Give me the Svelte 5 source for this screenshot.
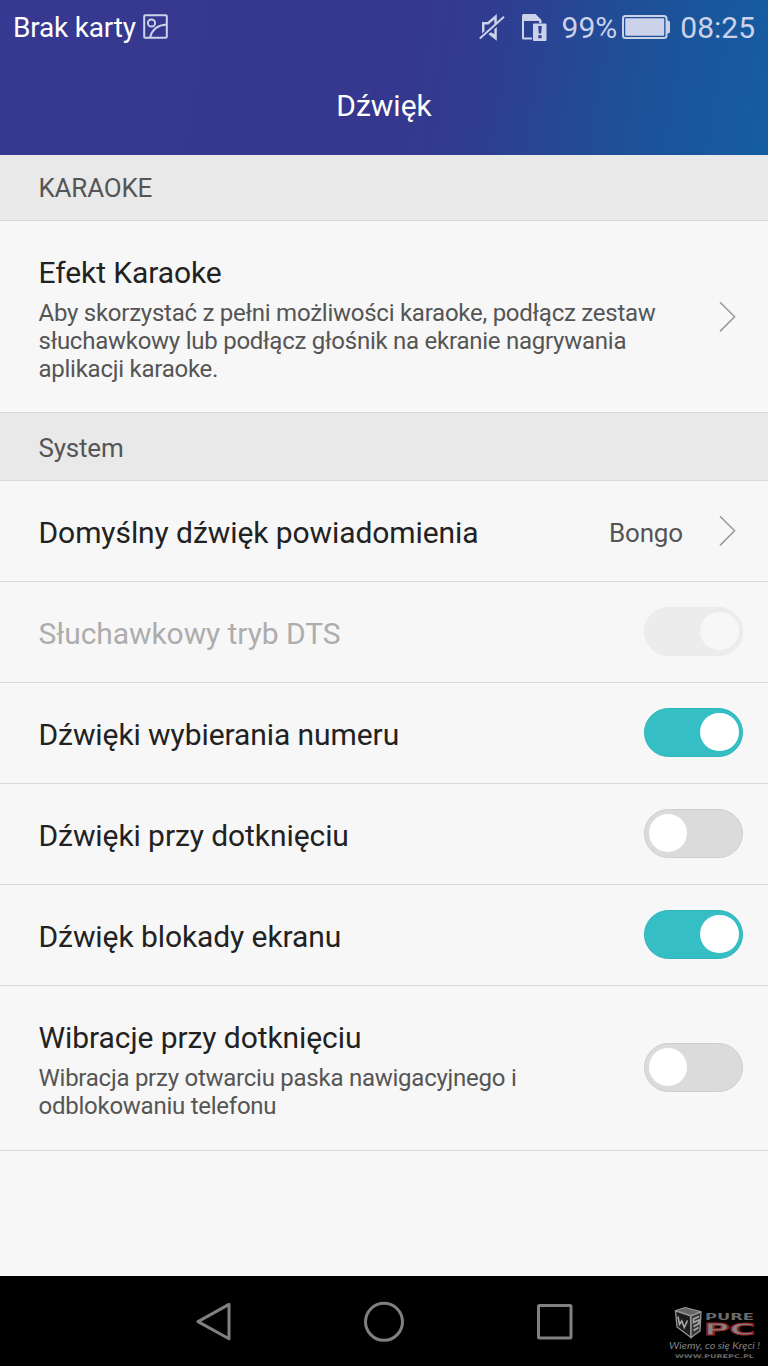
<script lang="ts">
    type Row = {
        title: string;
        summary?: string;
        value?: string;
        control: "arrow" | "switch";
        on?: boolean;
        disabled?: boolean;
    };

    type Section = { name: string; rows: Row[] };

    let sections: Section[] = $state([
        {
            name: "KARAOKE",
            rows: [
                {
                    title: "Efekt Karaoke",
                    summary:
                        "Aby skorzystać z pełni możliwości karaoke, podłącz zestaw słuchawkowy lub podłącz głośnik na ekranie nagrywania aplikacji karaoke.",
                    control: "arrow",
                },
            ],
        },
        {
            name: "System",
            rows: [
                { title: "Domyślny dźwięk powiadomienia", value: "Bongo", control: "arrow" },
                { title: "Słuchawkowy tryb DTS", control: "switch", on: true, disabled: true },
                { title: "Dźwięki wybierania numeru", control: "switch", on: true },
                { title: "Dźwięki przy dotknięciu", control: "switch", on: false },
                { title: "Dźwięk blokady ekranu", control: "switch", on: true },
                {
                    title: "Wibracje przy dotknięciu",
                    summary: "Wibracja przy otwarciu paska nawigacyjnego i odblokowaniu telefonu",
                    control: "switch",
                    on: false,
                },
            ],
        },
    ]);
</script>

<div class="screen">
    <header>
        <div class="status-bar">
            <span class="carrier">Brak karty</span>
            <svg class="picture" width="25" height="25" viewBox="0 0 25 25">
                <rect x="1.2" y="1.2" width="22.6" height="22.6" rx="1" />
                <circle cx="8.5" cy="9" r="3.6" />
                <path d="M7 23.5C9 16 15 11 23.5 10.5" />
            </svg>
            <div class="status-right">
                <svg class="mute" width="26" height="27" viewBox="0 0 26 27">
                    <path class="fill" d="M17.800 0V8.500L15.300 10.800V5.500L9.500 10.500H5.500V17L3 19.500V8H8.500z" />
                    <path class="fill" d="M17.800 13V26.800L9.500 20.300 11.800 18.200 15.300 20V15.200z" />
                    <path d="M.8 24.500 25 2.800" />
                </svg>
                <svg class="sim" width="25" height="27" viewBox="0 0 25 27">
                    <path class="fill" d="M0 1.500Q0 0 1.500 0H13.500L19.500 6V9H17V7H2V23.500H10V25.500H1.500Q0 25.500 0 24z" />
                    <path class="fill" fill-rule="evenodd" d="M12 9.500h11.500q1 0 1 1V26q0 1-1 1H12q-1 0-1-1V10.500q0-1 1-1zM16.200 12l.6 7.500h2.400l.6-7.500zM16.300 21.300v3h3.300v-3z" />
                </svg>
                <span class="percent">99%</span>
                <svg class="battery" width="48" height="24" viewBox="0 0 48 24">
                    <rect x="1" y="1" width="43.500" height="22" rx="2.500" />
                    <rect class="fill" x="3.200" y="3.200" width="39" height="17.600" rx="1" />
                    <path class="fill" d="M45 5.500h1q2 0 2 2v9q0 2-2 2h-1z" />
                </svg>
                <span class="clock">08:25</span>
            </div>
        </div>
        <h1>Dźwięk</h1>
    </header>

    <main>
        {#each sections as section}
            <h2>{section.name}</h2>
            {#each section.rows as row}
                <div class="row" class:disabled={row.disabled} class:tall={row.summary}>
                    <div class="text">
                        <div class="title">{row.title}</div>
                        {#if row.summary}
                            <p>{row.summary}</p>
                        {/if}
                    </div>
                    {#if row.value}
                        <span class="value">{row.value}</span>
                    {/if}
                    {#if row.control === "arrow"}
                        <svg class="arrow" width="18" height="32" viewBox="0 0 18 32">
                            <path d="M1 1.200 15.600 15.800 1 30.400" />
                        </svg>
                    {:else}
                        <button
                            class="switch"
                            class:on={row.on}
                            disabled={row.disabled}
                            aria-label={row.title}
                            onclick={() => (row.on = !row.on)}
                        >
                            <span class="knob"></span>
                        </button>
                    {/if}
                </div>
            {/each}
        {/each}
    </main>

    <nav>
        <svg class="keys" width="378" height="42" viewBox="0 0 378 42">
            <path d="M34 4.400V38.800L3 21.600z" />
            <circle cx="189" cy="21.800" r="18.500" />
            <rect x="343.500" y="5.500" width="32.500" height="32.500" rx="1" />
        </svg>
        <!-- Site logo in the corner -->
        <svg class="logo" width="96" height="56" viewBox="0 0 96 56">
            <g class="case">
                <path class="face" d="M3.500 3.500 13 .5 29 4.500 19 8.500z" />
                <path class="front" d="M3.500 4 18.500 9 19 30.500 5 20z" />
                <path class="side" d="M19 9 29 5 28 24 19 30.500z" />
                <path class="mark" d="M6 9.500l1.500 8 2.300-3.500 2.500 6.500 3.200-7" />
                <path class="mark" d="M27 9.500l-5.500 2.500v3.500l5.500-2.500v3.500l-5.500 3M21.500 23.500l5-3" />
            </g>
            <text class="pure" x="33" y="12.500" textLength="49" lengthAdjust="spacingAndGlyphs">PURE</text>
            <text class="pc" x="32" y="27.500" textLength="51" lengthAdjust="spacingAndGlyphs">PC</text>
            <text class="motto" x="-3" y="42" textLength="91" lengthAdjust="spacingAndGlyphs">Wiemy, co się Kręci !</text>
            <text class="site" x="3" y="50.500" textLength="79" lengthAdjust="spacingAndGlyphs">WWW.PUREPC.PL</text>
        </svg>
    </nav>
</div>

<style>
    :global(body) {
        margin: 0;
        background: #f7f7f7;
    }

    .screen {
        width: 768px;
        height: 1366px;
        display: flex;
        flex-direction: column;
        overflow: hidden;
        background: #f7f7f7;
        color: #222;
        font-family: Roboto, sans-serif;
    }

    header {
        height: 155px;
        box-sizing: border-box;
        background: linear-gradient(100deg, #37388f 0%, #36378e 48%, #303c90 62%, #1d5198 82%, #155da2 100%);
        color: #fff;
    }

    .status-bar {
        height: 55px;
        padding: 0 13px;
        display: flex;
        align-items: center;
    }

    .status-bar svg {
        fill: none;
        stroke: #cbd2ea;
        stroke-width: 2;
    }

    .status-bar svg .fill {
        fill: #cbd2ea;
        stroke: none;
    }

    .carrier {
        font-size: 28px;
        letter-spacing: -0.2px;
    }

    .picture {
        margin-left: 7px;
        margin-bottom: 3px;
    }

    .status-right {
        margin-left: auto;
        display: flex;
        align-items: center;
        color: #cbd2ea;
        font-size: 30px;
    }

    .mute {
        margin-right: 17px;
        margin-bottom: 1px;
    }

    .sim {
        margin-right: 15px;
        margin-bottom: 1px;
    }

    .battery {
        margin: 0 10px 2px 5px;
    }

    h1 {
        margin: 0;
        padding-top: 33px;
        font-size: 30px;
        line-height: 36px;
        font-weight: 400;
        text-align: center;
    }

    main {
        flex: 1;
    }

    h2 {
        margin: 0;
        height: 66px;
        box-sizing: border-box;
        padding-left: 38.5px;
        border-bottom: 1px solid #d9d9d9;
        background: #e9e9e9;
        color: #555;
        font-size: 26px;
        line-height: 66px;
        font-weight: 400;
        letter-spacing: -0.2px;
    }

    .row + h2 {
        height: 68px;
        line-height: 70px;
    }

    .row {
        height: 101px;
        box-sizing: border-box;
        padding: 0 25px 0 38.5px;
        display: flex;
        align-items: center;
        border-bottom: 1px solid #d9d9d9;
    }

    .row.tall {
        height: auto;
        padding-top: 34px;
        padding-bottom: 30px;
    }

    h2:first-child + .tall {
        padding-bottom: 29px;
    }

    .text {
        flex: 1;
    }

    .title {
        font-size: 30px;
        line-height: 36px;
        padding-top: 4px;
        letter-spacing: -0.08px;
    }

    .tall .title {
        padding-top: 0;
    }

    p {
        width: 630px;
        margin: 8px 0 0;
        color: #555;
        font-size: 24px;
        line-height: 28px;
        letter-spacing: -0.25px;
    }

    .text:has(+ .switch) p {
        width: 500px;
    }

    .value {
        margin-right: 36px;
        padding-top: 4px;
        color: #555;
        font-size: 26px;
        letter-spacing: -0.15px;
    }

    .arrow {
        margin-right: 6px;
        fill: none;
        stroke: #999;
        stroke-width: 1.5;
    }

    .tall .arrow {
        margin-bottom: 5px;
    }

    .disabled .title {
        color: #adadad;
    }

    .switch {
        width: 99px;
        height: 49px;
        box-sizing: border-box;
        margin: 0 0 2px;
        padding: 0 3.5px;
        display: flex;
        align-items: center;
        border: 1px solid #cecece;
        border-radius: 25px;
        background: #dbdbdb;
    }

    .tall .switch {
        margin-bottom: 6px;
    }

    .switch.on {
        justify-content: flex-end;
        border-color: #2fb5ba;
        background: #35bfc5;
    }

    .switch:disabled {
        border-color: #ebebeb;
        background: #ececec;
    }

    .knob {
        width: 38.5px;
        height: 38.5px;
        border-radius: 50%;
        background: #fff;
    }

    .switch:disabled .knob {
        background: #f7f7f7;
    }

    nav {
        position: relative;
        height: 90px;
        display: flex;
        align-items: center;
        justify-content: center;
        background: #000;
    }

    .keys {
        fill: none;
        stroke: #808080;
        stroke-width: 3;
        stroke-linejoin: round;
    }

    .logo {
        position: absolute;
        right: 0;
        bottom: 3px;
        overflow: visible;
        font-family: "DejaVu Sans", sans-serif;
    }

    .case .face {
        fill: #666;
        stroke: #999;
    }

    .case .front,
    .case .side {
        fill: #1c1c1c;
        stroke: #999;
        stroke-width: 1.3;
    }

    .case .side {
        fill: #383838;
    }

    .case .mark {
        fill: none;
        stroke: #aaa;
        stroke-width: 1.6;
    }

    .pure {
        fill: #6a6a6a;
        font-size: 8.5px;
        font-weight: 700;
    }

    .pc {
        fill: #858585;
        stroke: #8e2226;
        stroke-width: 1;
        font-size: 16px;
        font-weight: 700;
    }

    .motto {
        fill: #858585;
        font-family: Lato, sans-serif;
        font-size: 9.5px;
        font-style: italic;
    }

    .site {
        fill: #666;
        font-size: 5px;
        font-weight: 700;
    }
</style>
